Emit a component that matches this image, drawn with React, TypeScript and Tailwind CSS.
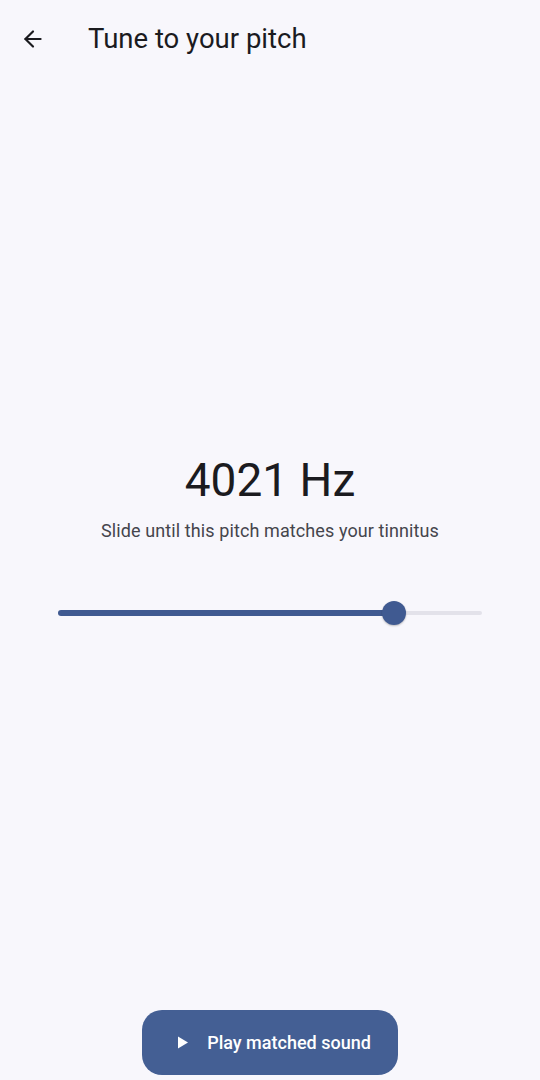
import { ArrowLeft } from "lucide-react";

// slider position of the matched tone, 0..100
const current = 4021;
const pct = 79.2;

export default function App() {
  return (
    <div
      className="flex h-[1080px] w-[540px] flex-col bg-[#f8f7fc] text-[#1b1b1f]"
      style={{ fontFamily: "Roboto, 'Noto Sans', sans-serif" }}
    >
      {/* Top bar */}
      <div className="flex h-[80px] items-center px-[20px] pb-[2px]">
        <ArrowLeft size={26} strokeWidth={2} className="text-[#1b1b1f]" />
        <h1 className="ml-[42px] text-[27.5px] leading-none">Tune to your pitch</h1>
      </div>

      {/* Frequency + slider */}
      <div className="flex flex-1 flex-col items-center pt-[377px]">
        <div className="text-[46px] leading-none">{current} Hz</div>
        <p className="mt-[19px] text-[18px] leading-none tracking-[0.1px] text-[#45454c]">
          Slide until this pitch matches your tinnitus
        </p>

        <div className="mt-[61px] w-[424px]">
          <div className="relative h-[24px]">
            <div className="absolute left-0 right-0 top-1/2 h-[4px] -translate-y-1/2 rounded-full bg-[#e3e2ea]" />
            <div
              className="absolute left-0 top-1/2 h-[6px] -translate-y-1/2 rounded-full bg-[#405a91]"
              style={{ width: `${pct}%` }}
            />
            <div
              className="absolute top-1/2 h-[24px] w-[24px] -translate-x-1/2 -translate-y-1/2 rounded-full bg-[#405a91] shadow-[0_1px_2px_rgba(0,0,0,0.25)]"
              style={{ left: `${pct}%` }}
            />
          </div>
        </div>
      </div>

      {/* Play button */}
      <div className="flex justify-center pb-[5px]">
        <button className="flex h-[65px] w-[256px] items-center justify-center gap-[18px] rounded-[20px] bg-[#445f94] pl-[8px] text-white">
          <svg width="12" height="13" viewBox="0 0 12 13">
            <path d="M1 0.5 L11 6.5 L1 12.5 Z" fill="white" />
          </svg>
          <span className="text-[18px] font-medium">Play matched sound</span>
        </button>
      </div>
    </div>
  );
}
